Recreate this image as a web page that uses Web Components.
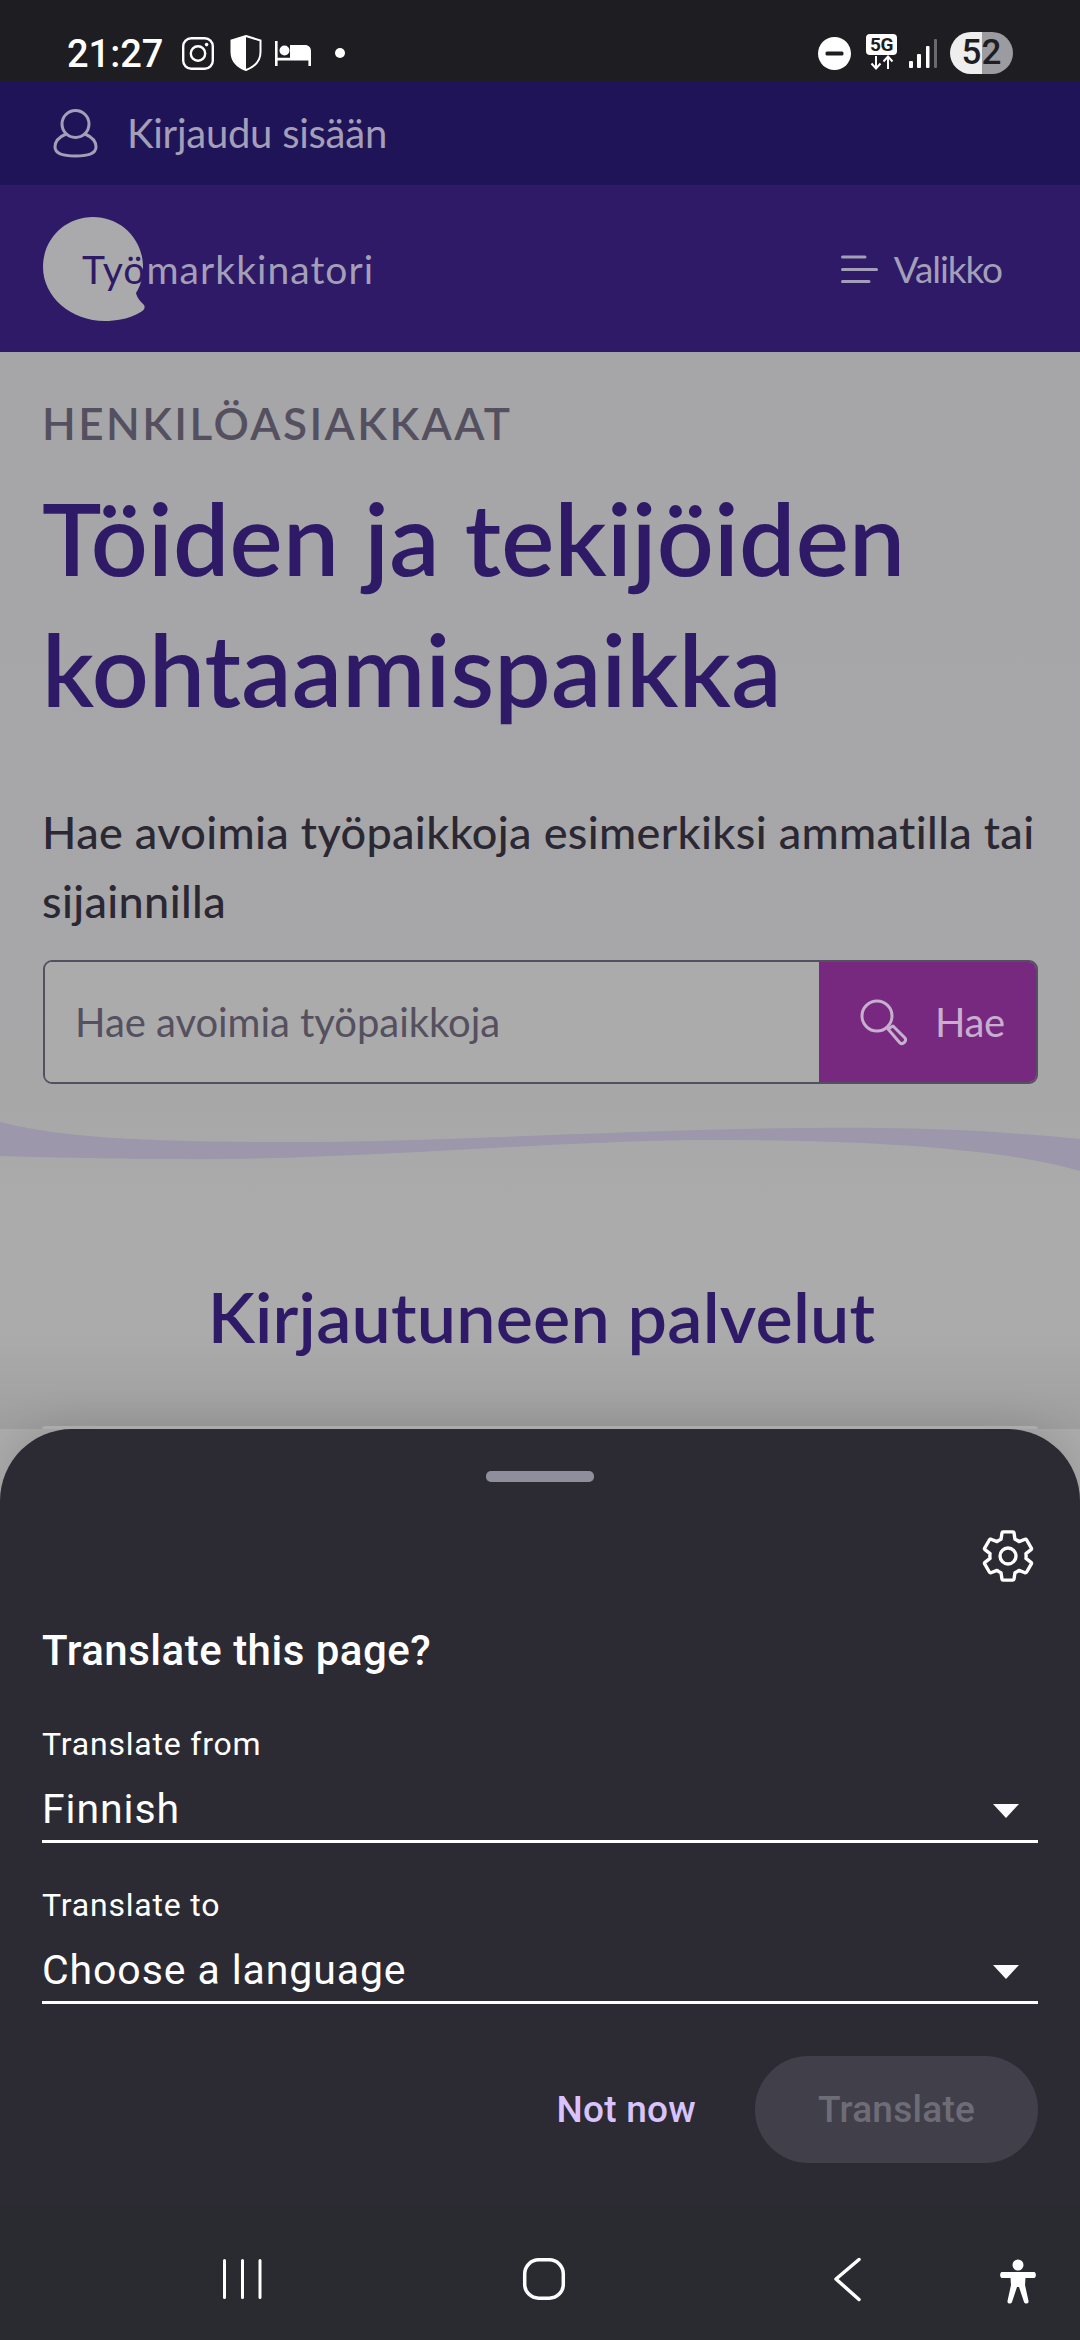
<!DOCTYPE html>
<html lang="fi"><head><meta charset="utf-8"><title>Työmarkkinatori</title>
<style>
html,body{margin:0;padding:0;width:1080px;height:2340px;overflow:hidden;background:#acacac}
app-shell{width:1080px;height:2340px}
</style></head><body>
<app-shell>
  <status-bar></status-bar>
  <login-bar>Kirjaudu sisään</login-bar>
  <site-header></site-header>
  <main-area>
    <hero-section></hero-section>
    <wave-divider></wave-divider>
    <services-title>Kirjautuneen palvelut</services-title>
  </main-area>
  <translate-sheet>
    <lang-select label="Translate from" value="Finnish"></lang-select>
    <lang-select class="second" label="Translate to" value="Choose a language"></lang-select>
  </translate-sheet>
</app-shell>
<script>
function def(name, html){
  customElements.define(name, class extends HTMLElement{
    constructor(){super();this.attachShadow({mode:'open'}).innerHTML=typeof html==='function'?html(this):html;}
  });
}
def('app-shell',`<style>:host{display:flex;flex-direction:column;overflow:hidden;background:#acacac}</style><slot></slot>`);

def('status-bar',`<style>
:host{display:flex;align-items:center;box-sizing:border-box;height:81px;padding:25px 67px 0 67px;background:#1e1d22;color:#fff;font-family:Roboto,sans-serif}
.time{font-size:38px;font-weight:500;line-height:40px;margin-top:2px;width:95px;white-space:nowrap}
svg{display:block;flex:none}
.ig{margin-left:20px}.sh{margin-left:16px}.bed{margin-left:13px}
.dot{width:10px;height:10px;border-radius:50%;background:#fff;margin-left:24px}
.right{margin-left:auto;display:flex;align-items:center;height:56px}
.g5{margin-left:15px;width:31px;display:flex;flex-direction:column;align-items:center;margin-top:-2px}
.g5 b{display:block;width:31px;height:21px;background:#fff;border-radius:4px;color:#1e1d22;font:700 19px/21px Roboto,sans-serif;text-align:center;letter-spacing:-.5px}
.sig{margin-left:12px}
.bat{margin-left:13px;width:63px;height:42px;border-radius:21px;background:linear-gradient(90deg,#eeeeef 0 32px,#9c9ba0 32px);color:#1e1d22;font:500 35px/42px Roboto,sans-serif;text-align:center}
</style>
<div class="time">21:27</div>
<svg class="ig" width="32" height="33" viewBox="0 0 32 33" fill="none" stroke="#fff" stroke-width="2.4"><rect x="1.2" y="1.2" width="29.6" height="30.6" rx="8"/><circle cx="16" cy="16.5" r="7.2"/><circle cx="24.6" cy="7.6" r="1.8" fill="#fff" stroke="none"/></svg>
<svg class="sh" width="32" height="36" viewBox="0 0 32 36"><path d="M16 1 L30.5 5.5 V17 C30.5 26 24 32 16 35 C8 32 1.5 26 1.5 17 V5.5 Z" fill="none" stroke="#fff" stroke-width="2"/><path d="M16 1 V35 C8 32 1.5 26 1.5 17 V5.5 Z" fill="#fff"/></svg>
<svg class="bed" width="36" height="25" viewBox="0 0 36 25" fill="#fff"><rect x="0" y="0" width="2.6" height="25"/><circle cx="9.5" cy="9.5" r="5"/><path d="M15 4 H30 C33.5 4 36 6.5 36 10 V25 H33.4 V19.5 H2 V16.8 H15 Z"/></svg>
<div class="dot"></div>
<div class="right">
<svg width="33" height="33" viewBox="0 0 33 33"><circle cx="16.5" cy="16.5" r="16.5" fill="#fff"/><rect x="7.5" y="14.5" width="18" height="4" rx="1.5" fill="#1e1d22"/></svg>
<div class="g5"><b>5G</b><svg width="24" height="15" viewBox="0 0 24 15" fill="none" stroke="#fff" stroke-width="2"><path d="M6 1V13M1.5 8.5 6 13.5 10.5 8.5"/><path d="M18 14V2M13.5 6.5 18 1.5 22.5 6.5"/></svg></div>
<svg class="sig" width="28" height="29" viewBox="0 0 28 29"><rect x="0" y="22" width="4" height="7" rx="1" fill="#fff"/><rect x="8" y="15" width="4" height="14" rx="1" fill="#fff"/><rect x="17" y="7" width="3.5" height="22" rx="1" fill="#fff"/><rect x="25" y="0" width="3" height="29" rx="1" fill="#6a696e"/></svg>
<div class="bat">52</div>
</div>`);

def('login-bar',`<style>
:host{display:flex;align-items:center;box-sizing:border-box;height:104px;padding-left:53px;background:#201459;color:#a49fb8;font:400 40px Lato,sans-serif;letter-spacing:-.25px}
svg{display:block;margin-right:29px}
</style>
<svg width="45" height="49" viewBox="0 0 45 49" fill="none" stroke="#a49fb8" stroke-width="3"><circle cx="22.5" cy="15" r="13.5"/><path d="M13 25 C6 28 2 33 2 38 C2 44 10 47 22.5 47 C35 47 43 44 43 38 C43 33 39 28 32 25"/></svg><slot></slot>`);

def('site-header',`<style>
:host{display:flex;align-items:center;box-sizing:border-box;height:167px;padding:0 78px 0 43px;background:#2e1a66;color:#a49fb8}
.logo{position:relative;height:104px;display:flex;align-items:center;padding-left:39px;font:400 39px Lato,sans-serif;letter-spacing:1.05px;white-space:nowrap}
.logo svg{position:absolute;left:0;top:0}
.logo span{position:relative}
.logo .d{color:#2e1a66}
.menu{margin-left:auto;display:flex;align-items:center;font:400 37px Lato,sans-serif;letter-spacing:-1.1px}
.menu svg{display:block;margin-right:16px}
</style>
<div class="logo"><svg width="104" height="106" viewBox="0 0 104 106"><path fill="#aaaaac" d="M50 0C78 0 100 22 100 50C100 60 98 68 93 76C94 81 98 85 101 88C103 92 100 94 96 96C86 102 72 104 62 104C28 104 0 80 0 50C0 22 22 0 50 0Z"/></svg><span><span class="d">Työ</span>markkinatori</span></div>
<div class="menu"><svg width="37" height="28" viewBox="0 0 37 28" stroke="#a49fb8" stroke-width="3" stroke-linecap="round"><path d="M1.5 2H24M1.5 14.5H35.5M1.5 26.5H28"/></svg>Valikko</div>`);

def('main-area',`<style>:host{display:block;height:1077px;overflow:hidden;background:linear-gradient(#a6a6a8 0,#a7a7a8 740px,#ababab 860px,#ababab 980px,#9f9f9f 1077px)}</style><slot></slot>`);

def('hero-section',`<style>
:host{display:block;padding:41px 42px 0 42px;font-family:Lato,sans-serif}
.eye{font:600 44px/60px Lato,sans-serif;color:#55505f;letter-spacing:2.45px}
h1{margin:19px -10px 0 0;font:600 100px/131px Lato,sans-serif;color:#2e1a66;letter-spacing:.2px}
p{margin:64px -20px 0 0;font:500 45px/69px Lato,sans-serif;color:#2b2833;letter-spacing:.34px;white-space:nowrap}
search-box{margin-top:24px}
</style>
<div class="eye">HENKILÖASIAKKAAT</div>
<h1>Töiden ja tekijöiden<br>kohtaamispaikka</h1>
<p>Hae avoimia työpaikkoja esimerkiksi ammatilla tai<br>sijainnilla</p>
<search-box></search-box>`);

def('search-box',`<style>
:host{display:flex;box-sizing:border-box;width:995px;height:124px;margin-left:1px;border:2px solid #55505f;border-radius:9px;overflow:hidden;font:400 40px Lato,sans-serif}
.input{flex:1;display:flex;align-items:center;padding-left:30px;color:#55505f;letter-spacing:-.05px;background:#ababab}
.btn{width:217px;box-sizing:border-box;background:#76297e;color:#c8aecf;display:flex;align-items:center;padding-left:41px;letter-spacing:-.4px}
svg{display:block;margin-right:27px;flex:none}
</style>
<div class="input">Hae avoimia työpaikkoja</div>
<div class="btn"><svg width="48" height="47" viewBox="0 0 48 47" fill="none" stroke="#c8aecf" stroke-width="3"><circle cx="17" cy="17" r="15"/><path d="M28 30 L33 27 L45 39 C47 42 43 46 40 44 Z" stroke-linejoin="round"/></svg>Hae</div>`);

def('wave-divider',`<style>:host{display:block;height:60px;margin-top:35px}svg{display:block}</style>
<svg width="1080" height="60" viewBox="0 0 1080 60"><path fill="#9c97aa" d="M0 3C60 18 130 22 260 23C450 24 620 10 812 9C920 8 1000 12 1080 20L1080 52C1000 28 850 20 690 21C520 24 340 42 172 40C100 40 50 38 0 37Z"/></svg>`);

def('services-title',`<style>:host{display:block;margin-top:92px;text-align:center;padding-left:3px;font:600 70px/90px Lato,sans-serif;color:#2e1a66;letter-spacing:.2px}</style><slot></slot>`);

def('translate-sheet',`<style>
:host{display:block;position:relative;height:911px;background:#2c2b34;border-radius:72px 72px 0 0;box-shadow:0 -6px 40px rgba(0,0,0,.12);color:#fff;font-family:Roboto,sans-serif}
.strip{position:absolute;left:42px;right:42px;top:-3px;height:3px;background:#ababab;border-radius:3px 3px 0 0}
.pad{padding:42px 42px 0}
.handle{width:108px;height:11px;margin:0 auto;background:#8f8e9c;border-radius:5px}
.gear{display:flex;justify-content:flex-end;margin:45px 1px 0 0}
.gear svg{display:block}
h2{margin:40px 0 0;font:500 42px/52px Roboto,sans-serif;letter-spacing:.5px}
.actions{display:flex;justify-content:flex-end;align-items:center;margin-top:52px;font:500 37px Roboto,sans-serif;letter-spacing:.25px}
.not{color:#d9c3ff;margin-right:59px}
.go{width:283px;height:107px;border-radius:54px;background:#41404a;color:#6e6d77;display:flex;align-items:center;justify-content:center}
nav-bar{margin-top:41px}
::slotted(lang-select){margin-top:47px}
::slotted(.second){margin-top:42px}
</style>
<div class="strip"></div>
<div class="pad">
<div class="handle"></div>
<div class="gear"><svg width="58" height="58" viewBox="0 0 24 24" fill="none" stroke="#fff" stroke-width="1.4" stroke-linejoin="round"><path d="M19.43 12.98c.04-.32.07-.64.07-.98 0-.34-.03-.66-.07-.98l2.11-1.65c.19-.15.24-.42.12-.64l-2-3.46c-.09-.16-.26-.25-.44-.25-.06 0-.12.01-.17.03l-2.49 1c-.52-.4-1.08-.73-1.69-.98l-.38-2.65C14.46 2.18 14.25 2 14 2h-4c-.25 0-.46.18-.49.42l-.38 2.65c-.61.25-1.17.59-1.69.98l-2.49-1c-.06-.02-.12-.03-.18-.03-.17 0-.34.09-.43.25l-2 3.46c-.13.22-.07.49.12.64l2.11 1.65c-.04.32-.07.65-.07.98 0 .33.03.66.07.98l-2.11 1.65c-.19.15-.24.42-.12.64l2 3.46c.09.16.26.25.44.25.06 0 .12-.01.17-.03l2.49-1c.52.4 1.08.73 1.69.98l.38 2.65c.03.24.24.42.49.42h4c.25 0 .46-.18.49-.42l.38-2.65c.61-.25 1.17-.59 1.69-.98l2.49 1c.06.02.12.03.18.03.17 0 .34-.09.43-.25l2-3.46c.12-.22.07-.49-.12-.64l-2.11-1.65z"/><circle cx="12" cy="12" r="3.3"/></svg></div>
<h2>Translate this page?</h2>
<slot></slot>
<div class="actions"><span class="not">Not now</span><span class="go">Translate</span></div>
</div>
<nav-bar></nav-bar>`);

def('lang-select',el=>`<style>
:host{display:block;box-sizing:border-box;height:119px;border-bottom:3px solid #fff;position:relative}
.l{font:400 32px/40px Roboto,sans-serif;letter-spacing:.8px}
.row{display:flex;align-items:center;margin-top:19px}
.v{font:400 41px/52px Roboto,sans-serif;letter-spacing:.9px;flex:1}
svg{display:block;margin-right:19px;margin-top:3px}
</style>
<div class="l">${el.getAttribute('label')}</div>
<div class="row"><div class="v">${el.getAttribute('value')}</div><svg width="26" height="14" viewBox="0 0 26 14"><path d="M0 0H26L13 14Z" fill="#fafaff"/></svg></div>`);

def('nav-bar',`<style>
:host{display:flex;box-sizing:border-box;height:137px;padding:50px 0 0 222px;background:#2a2a31}
svg{display:block;flex:none}
.h{margin-left:259px}.b{margin-left:266px}.a{margin-left:137px}
</style>
<svg width="40" height="50" viewBox="0 0 40 50" stroke="#fff" stroke-width="3" stroke-linecap="round"><path d="M2.5 6.5V43.5M20.5 6.5V43.5M38 6.5V43.5"/></svg>
<svg class="h" width="46" height="50" viewBox="0 0 46 50" fill="none" stroke="#fff" stroke-width="3.5"><rect x="3.7" y="5.8" width="38.6" height="38.4" rx="14"/></svg>
<svg class="b" width="28" height="50" viewBox="0 0 28 50" fill="none" stroke="#fff" stroke-width="3.5" stroke-linecap="round" stroke-linejoin="round"><path d="M26 5.5 3 25 26 45.5"/></svg>
<svg class="a" width="40" height="50" viewBox="0 0 40 50" fill="#fff"><circle cx="20" cy="11" r="5.5"/><path d="M4 18H36C38.5 18 38.5 24 36 24H27.5L27 31L30.5 47C31 50 27 50.5 26 48L21 33H19L14 48C13 50.5 9 50 9.5 47L13 31L12.5 24H4C1.5 24 1.5 18 4 18Z"/></svg>`);
</script>
</body></html>
